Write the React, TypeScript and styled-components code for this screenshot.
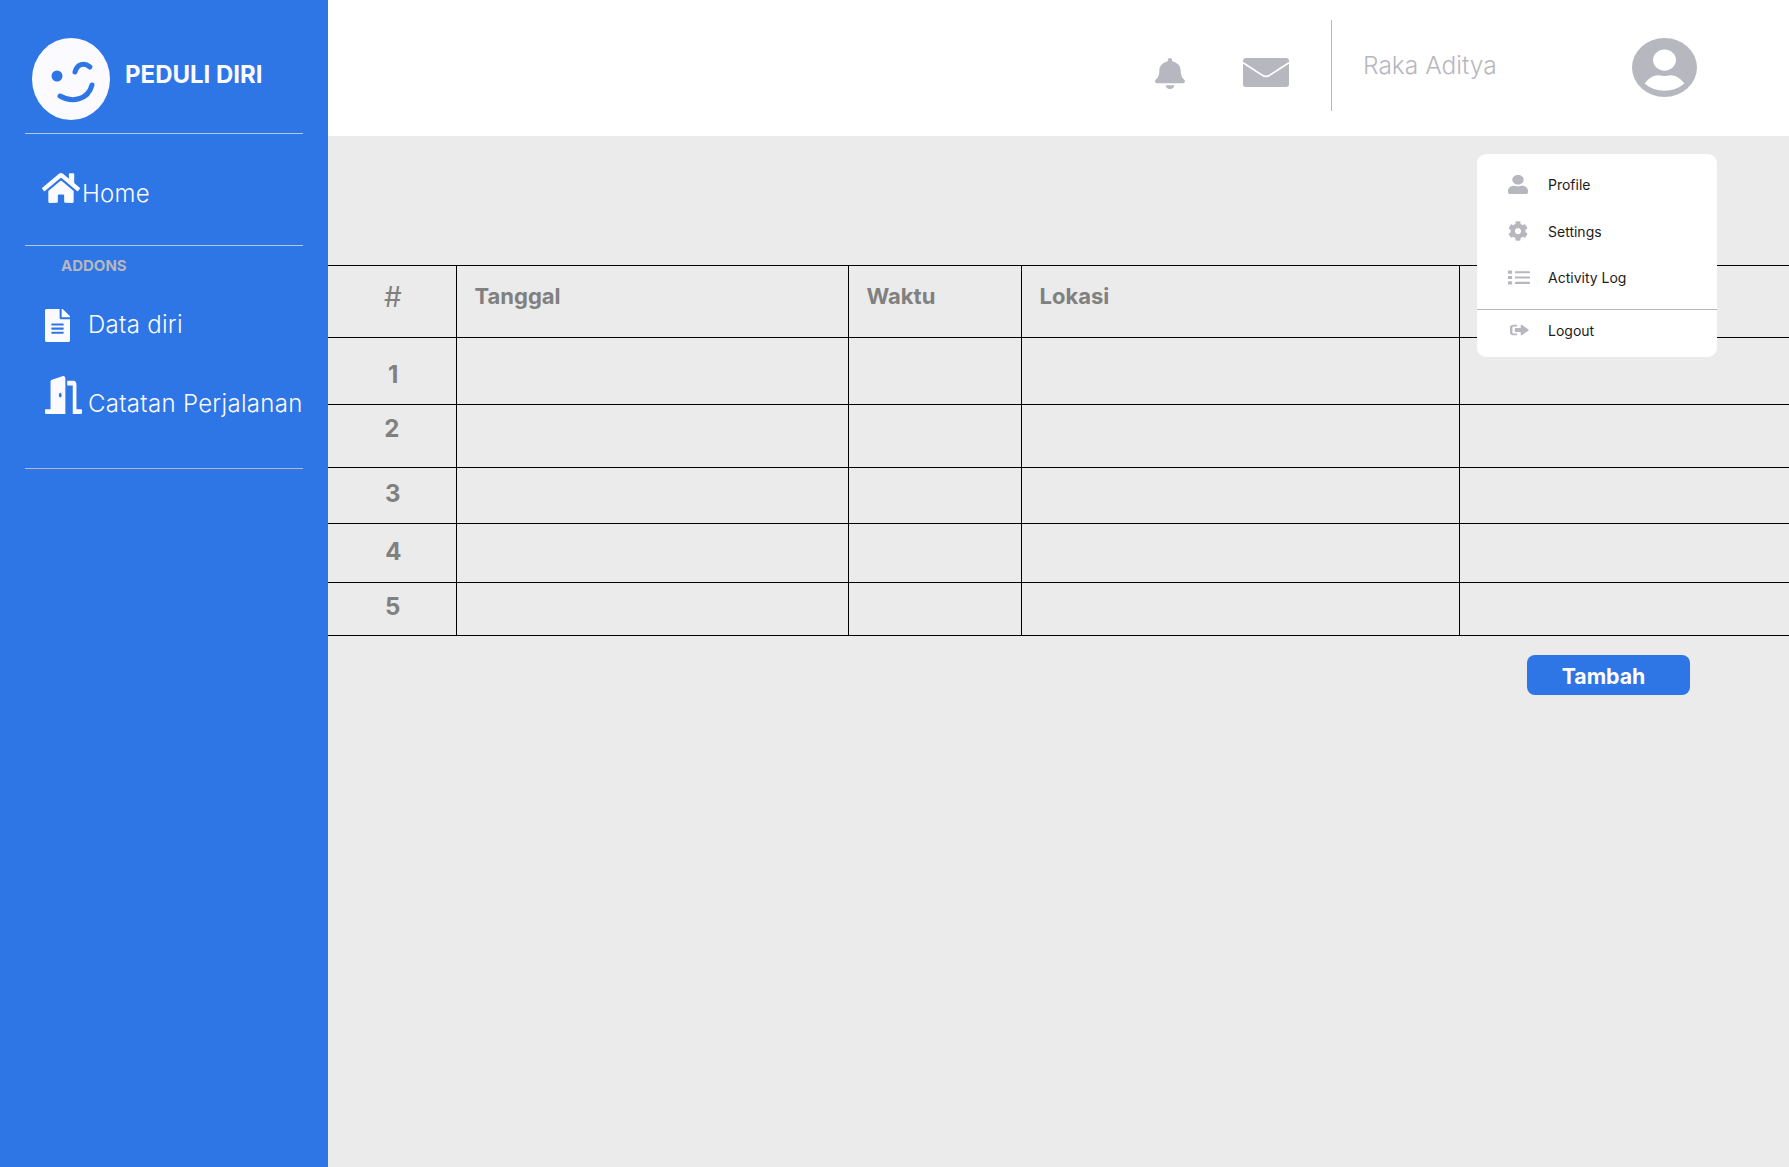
import styled, { createGlobalStyle } from "styled-components";
import { FaBell, FaCog, FaDoorOpen, FaFileAlt, FaHome, FaList, FaSignOutAlt, FaUser } from "react-icons/fa";

const Colors = {
    blue: "#2e75e5",
    page: "#ebebeb",
    gray: "#b7b7c0",
    tableText: "#808080",
    nearWhite: "#fbfbff",
};

const GlobalStyle = createGlobalStyle`
    html, body {
        margin: 0;
        padding: 0;
        background: ${Colors.page};
        font-family: Inter, "Liberation Sans", sans-serif;
    }
`;

const Page = styled.div`
    width: 1789px;
    height: 1167px;
    display: flex;
    overflow: hidden;
`;

const Sidebar = styled.aside`
    width: 328px;
    flex-shrink: 0;
    background: ${Colors.blue};
    display: flex;
    flex-direction: column;
`;

const Brand = styled.div`
    height: 133px;
    box-sizing: border-box;
    padding: 38px 0 0 32px;
    display: flex;
    align-items: flex-start;
    gap: 15px;
`;

const BrandName = styled.div`
    margin-top: 22px;
    color: ${Colors.nearWhite};
    font-size: 24px;
    line-height: 30px;
    font-weight: 700;
`;

const Divider = styled.hr<{ $color?: string }>`
    width: 278px;
    height: 1px;
    margin: 0 0 0 25px;
    border: 0;
    flex-shrink: 0;
    background: ${(p) => p.$color || "#b4c6e6"};
`;

const NavItem = styled.div<{ $height: number; $left: number; $gap: number; $top: number }>`
    height: ${(p) => p.$height}px;
    box-sizing: border-box;
    padding: ${(p) => p.$top}px 0 0 ${(p) => p.$left}px;
    display: flex;
    align-items: flex-start;
    gap: ${(p) => p.$gap}px;
    color: ${Colors.nearWhite};
    font-size: 24px;
    line-height: 30px;
    font-weight: 300;
    letter-spacing: 0.3px;
`;

const NavIcon = styled.span<{ $w: number; $h: number }>`
    width: ${(p) => p.$w}px;
    height: ${(p) => p.$h}px;
    display: block;
    flex-shrink: 0;

    svg {
        width: 100%;
        height: 100%;
        display: block;
        fill: ${Colors.nearWhite};
    }
`;

const NavText = styled.span<{ $drop: number }>`
    margin-top: ${(p) => p.$drop}px;
    white-space: nowrap;
`;

const SectionLabel = styled.div`
    height: 29px;
    box-sizing: border-box;
    padding: 11px 0 0 61px;
    color: ${Colors.gray};
    font-size: 15px;
    line-height: 18px;
    font-weight: 700;
`;

const Main = styled.main`
    flex: 1;
    min-width: 0;
    display: flex;
    flex-direction: column;
    position: relative;
`;

const Topbar = styled.header`
    height: 136px;
    flex-shrink: 0;
    background: #ffffff;
    display: flex;
    align-items: flex-start;
`;

const TopIcon = styled.span<{ $w: number; $h: number; $left: number; $top: number }>`
    width: ${(p) => p.$w}px;
    height: ${(p) => p.$h}px;
    margin: ${(p) => p.$top}px 0 0 ${(p) => p.$left}px;
    display: block;
    flex-shrink: 0;

    svg {
        width: 100%;
        height: 100%;
        display: block;
        fill: ${Colors.gray};
    }
`;

const TopDivider = styled.div`
    width: 1px;
    height: 91px;
    margin: 20px 0 0 42px;
    background: ${Colors.gray};
`;

const UserName = styled.div`
    width: 269px;
    margin: 50px 0 0 31px;
    color: ${Colors.gray};
    font-size: 24.5px;
    line-height: 30px;
    font-weight: 300;
    flex-shrink: 0;
`;

const Content = styled.section`
    flex: 1;
    padding-top: 129px;
    background: ${Colors.page};
`;

const Table = styled.table`
    width: 1461px;
    table-layout: fixed;
    border-collapse: collapse;
    border-top: 1px solid #000;
    border-bottom: 1px solid #000;
    color: ${Colors.tableText};
`;

const Row = styled.tr<{ $height: number }>`
    height: ${(p) => p.$height}px;
    border-top: 1px solid #000;
`;

const HeadCell = styled.th`
    padding: 14px 18px 0;
    vertical-align: top;
    text-align: left;
    font-size: 22px;
    line-height: 32px;
    font-weight: 700;
    border-left: 1px solid #000;

    &:first-child {
        border-left: 0;
    }
`;

const HashCell = styled(HeadCell)`
    padding: 15px 0 0 2px;
    text-align: center;
    font-size: 28px;
    font-weight: 400;
`;

const NumCell = styled.td<{ $top: number; $left: number }>`
    padding: ${(p) => p.$top}px 0 0 ${(p) => p.$left}px;
    vertical-align: top;
    text-align: center;
    font-size: 24px;
    line-height: 30px;
    font-weight: 700;
`;

const Cell = styled.td`
    padding: 0;
    border-left: 1px solid #000;
`;

const Actions = styled.div`
    display: flex;
    justify-content: flex-end;
    padding: 19px 99px 0 0;
`;

const AddButton = styled.button`
    width: 163px;
    height: 40px;
    padding: 2px 10px 0 0;
    border: 0;
    border-radius: 8px;
    background: ${Colors.blue};
    color: #ffffff;
    font-family: inherit;
    font-size: 21.3px;
    font-weight: 700;
`;

const Menu = styled.div`
    position: absolute;
    left: 1149px;
    top: 154px;
    width: 240px;
    height: 203px;
    box-sizing: border-box;
    padding-top: 7px;
    border-radius: 9px;
    background: #ffffff;
    display: flex;
    flex-direction: column;
`;

const MenuItem = styled.div<{ $height: number }>`
    height: ${(p) => p.$height}px;
    flex-shrink: 0;
    box-sizing: border-box;
    padding-left: 31px;
    display: flex;
    align-items: center;
    gap: 20px;
    color: #1c1c1c;
    font-size: 14px;
`;

const MenuIcon = styled.span<{ $w: number; $h: number; $shift?: number }>`
    width: 20px;
    height: 20px;
    display: flex;
    align-items: center;
    flex-shrink: 0;

    svg {
        width: ${(p) => p.$w}px;
        height: ${(p) => p.$h}px;
        margin-left: ${(p) => p.$shift || 0}px;
        flex-shrink: 0;
        fill: ${Colors.gray};
    }
`;

const MenuDivider = styled.div`
    height: 1px;
    margin-top: 9px;
    flex-shrink: 0;
    background: ${Colors.gray};
`;

const Logo = () => (
    <svg width="78" height="82" viewBox="0 0 78 82" style={{ flexShrink: 0 }}>
        <ellipse cx="39" cy="41" rx="39" ry="41" fill={Colors.nearWhite} />
        <ellipse cx="25" cy="38" rx="5.5" ry="5.5" fill={Colors.blue} />
        <path d="M43 34 C45 26 52 24 58 29" fill="none" stroke={Colors.blue} strokeWidth="5" strokeLinecap="round" />
        <path d="M28 58 C40 65 56 62 60 47" fill="none" stroke={Colors.blue} strokeWidth="5" strokeLinecap="round" />
    </svg>
);

const Envelope = () => (
    <svg viewBox="0 0 120 85" preserveAspectRatio="none">
        <rect width="120" height="85" rx="8" />
        <path d="M0 14 L50 50 Q60 58 70 50 L120 14" fill="none" stroke="#fff" strokeWidth="5" />
    </svg>
);

const Avatar = () => (
    <svg viewBox="0 0 170 179" preserveAspectRatio="none">
        <ellipse cx="85" cy="89.5" rx="85" ry="89.5" />
        <ellipse cx="85" cy="67" rx="30" ry="32" fill="#fff" />
        <path d="M33 138 Q50 112 70 113 Q85 118 100 113 Q120 112 137 138 Q115 160 85 160 Q55 160 33 138Z" fill="#fff" />
    </svg>
);

const rows = [
    { no: 1, height: 67, top: 22, left: 3 },
    { no: 2, height: 63, top: 9, left: 0 },
    { no: 3, height: 56, top: 11, left: 2 },
    { no: 4, height: 59, top: 13, left: 3 },
    { no: 5, height: 53, top: 9, left: 2 },
];

function App() {
    return (
        <Page>
            <GlobalStyle />
            <Sidebar>
                <Brand>
                    <Logo />
                    <BrandName>PEDULI DIRI</BrandName>
                </Brand>
                <Divider />
                <NavItem $height={111} $left={42} $gap={2} $top={37}>
                    <NavIcon $w={38} $h={34}>
                        <FaHome preserveAspectRatio="none" />
                    </NavIcon>
                    <NavText $drop={8}>Home</NavText>
                </NavItem>
                <Divider />
                <SectionLabel>ADDONS</SectionLabel>
                <NavItem $height={68} $left={45} $gap={18} $top={34}>
                    <NavIcon $w={25} $h={33}>
                        <FaFileAlt preserveAspectRatio="none" />
                    </NavIcon>
                    <NavText $drop={1}>Data diri</NavText>
                </NavItem>
                <NavItem $height={125} $left={45} $gap={6} $top={33}>
                    <NavIcon $w={37} $h={38}>
                        <FaDoorOpen preserveAspectRatio="none" />
                    </NavIcon>
                    <NavText $drop={13}>Catatan Perjalanan</NavText>
                </NavItem>
                <Divider $color={Colors.gray} />
            </Sidebar>
            <Main>
                <Topbar>
                    <TopIcon $w={30} $h={31} $left={827} $top={58}>
                        <FaBell preserveAspectRatio="none" />
                    </TopIcon>
                    <TopIcon $w={46} $h={29} $left={58} $top={58}>
                        <Envelope />
                    </TopIcon>
                    <TopDivider />
                    <UserName>Raka Aditya</UserName>
                    <TopIcon $w={65} $h={59} $left={0} $top={38}>
                        <Avatar />
                    </TopIcon>
                </Topbar>
                <Content>
                    <Table>
                        <colgroup>
                            <col style={{ width: 128 }} />
                            <col style={{ width: 392 }} />
                            <col style={{ width: 173 }} />
                            <col style={{ width: 438 }} />
                            <col />
                        </colgroup>
                        <thead>
                            <Row $height={72}>
                                <HashCell>#</HashCell>
                                <HeadCell>Tanggal</HeadCell>
                                <HeadCell>Waktu</HeadCell>
                                <HeadCell>Lokasi</HeadCell>
                                <HeadCell />
                            </Row>
                        </thead>
                        <tbody>
                            {rows.map((row) => (
                                <Row key={row.no} $height={row.height}>
                                    <NumCell $top={row.top} $left={row.left}>{row.no}</NumCell>
                                    <Cell />
                                    <Cell />
                                    <Cell />
                                    <Cell />
                                </Row>
                            ))}
                        </tbody>
                    </Table>
                    <Actions>
                        <AddButton>Tambah</AddButton>
                    </Actions>
                </Content>
                <Menu>
                    <MenuItem $height={47}>
                        <MenuIcon $w={20} $h={19}><FaUser preserveAspectRatio="none" /></MenuIcon>
                        Profile
                    </MenuItem>
                    <MenuItem $height={46}>
                        <MenuIcon $w={20} $h={20}><FaCog preserveAspectRatio="none" /></MenuIcon>
                        Settings
                    </MenuItem>
                    <MenuItem $height={46}>
                        <MenuIcon $w={22} $h={17}><FaList preserveAspectRatio="none" /></MenuIcon>
                        Activity Log
                    </MenuItem>
                    <MenuDivider />
                    <MenuItem $height={40}>
                        <MenuIcon $w={19} $h={14} $shift={2}><FaSignOutAlt preserveAspectRatio="none" /></MenuIcon>
                        Logout
                    </MenuItem>
                </Menu>
            </Main>
        </Page>
    );
}

export default App;
